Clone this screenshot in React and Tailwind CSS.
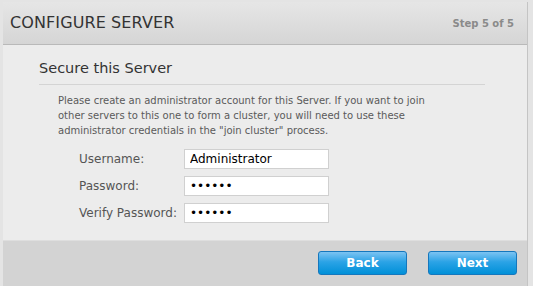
export default function App() {
  const fields = [
    { label: "Username:", value: "Administrator", type: "text" },
    { label: "Password:", value: "secret", type: "password" },
    { label: "Verify Password:", value: "secret", type: "password" },
  ];

  return (
    <div
      className="w-[533px] h-[286px] bg-[#e4e4e4] pt-[2px] pl-[3px] pr-[5px] overflow-hidden"
      style={{ fontFamily: '"DejaVu Sans", Verdana, sans-serif' }}
    >
      <div className="h-full flex flex-col border-r border-[#c4c4c4] bg-[#ececec]">
        {/* Header */}
        <div className="h-[43px] shrink-0 flex items-center justify-between pl-[7px] pr-[13px] bg-gradient-to-b from-[#e6e6e6] to-[#d5d5d5] border-b border-[#b9b9b9]">
          <h1 className="text-[16px] text-[#333] tracking-[0.1px]">CONFIGURE SERVER</h1>
          <span className="text-[10px] font-bold text-[#8a8a8a]">Step 5 of 5</span>
        </div>

        {/* Body */}
        <div className="flex-1 pl-[36px] pr-[42px] pt-[13px]">
          <h2 className="text-[14.5px] text-[#333] pb-[4px] border-b border-[#d4d4d4]">
            Secure this Server
          </h2>
          <p className="mt-[8px] pl-[19px] pr-[40px] text-[10px] leading-[15px] text-[#5a5a5a]">
            Please create an administrator account for this Server. If you want to join
            other servers to this one to form a cluster, you will need to use these
            administrator credentials in the "join cluster" process.
          </p>

          <div className="mt-[11px] pl-[40px] flex flex-col gap-[7px]">
            {fields.map((f) => (
              <div key={f.label} className="flex items-center">
                <label className="w-[105px] text-[12px] text-[#555]">{f.label}</label>
                <input
                  readOnly
                  type={f.type}
                  value={f.value}
                  className="w-[145px] h-[20px] px-[5px] bg-white border border-[#d0d0d0] text-[12px] text-black outline-none"
                  style={{ fontFamily: '"DejaVu Sans", Verdana, sans-serif' }}
                />
              </div>
            ))}
          </div>
        </div>

        {/* Footer */}
        <div className="h-[46px] shrink-0 flex items-start justify-end gap-[21px] pt-[10px] pr-[10px] bg-[#d3d3d3] border-t border-[#dedede]">
          {["Back", "Next"].map((b) => (
            <button
              key={b}
              className="w-[89px] h-[24px] rounded-[3px] border border-[#1577bd] bg-[linear-gradient(to_bottom,#7cc3f2,#2ba3e6_45%,#0090d8)] text-white text-[12px] font-bold"
            >
              {b}
            </button>
          ))}
        </div>
      </div>
    </div>
  );
}
